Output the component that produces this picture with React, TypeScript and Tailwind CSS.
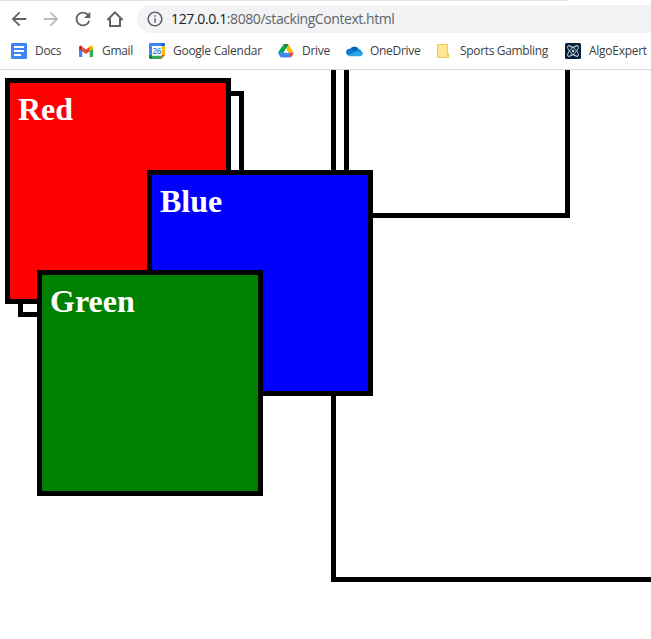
import type { ReactNode } from "react";
import { MdArrowBack, MdArrowForward, MdRefresh, MdOutlineInfo } from "react-icons/md";

function HomeIcon() {
  return (
    <svg width="18" height="18" viewBox="0 0 18 18" fill="none" stroke="#5f6368" strokeWidth="2">
      <path d="M1.4 10 9 2.4 16.6 10M4 8.3V16H14V8.3" />
    </svg>
  );
}

function DocsIcon() {
  return (
    <svg width="16" height="16" viewBox="0 0 16 16">
      <rect width="16" height="16" rx="1" fill="#4285f4" />
      <path d="M3 4h10M3 8h10M3 12h7" stroke="#fff" strokeWidth="2" />
    </svg>
  );
}

function GmailIcon() {
  return (
    <svg width="16" height="16" viewBox="0 0 16 16">
      <path d="M1 4v9.2c0 .5.3.8.8.8h2.5V6.5z" fill="#4285f4" />
      <path d="M15 4v9.2c0 .5-.3.8-.8.8h-2.5V6.5z" fill="#34a853" />
      <path d="M11.7 3.8v4.4L15 5.8V4.2c0-1.6-1.6-2.2-2.6-1.2z" fill="#fbbc04" />
      <path d="M1 4.2v1.6l3.3 2.4V3.8L3.6 3C2.6 2.2 1 2.8 1 4.2z" fill="#c5221f" />
      <path d="M4.3 3.8 8 6.6l3.7-2.8v4.4L8 11 4.3 8.2z" fill="#ea4335" />
    </svg>
  );
}

function CalendarIcon() {
  return (
    <svg width="16" height="16" viewBox="0 0 16 16">
      <path d="M1.2 0H12v3H3v9H0V1.2C0 .5.5 0 1.2 0z" fill="#4285f4" />
      <path d="M12 0h2.8C15.5 0 16 .5 16 1.2V3h-4z" fill="#1967d2" />
      <path d="M12.5 3H16v9h-3.5z" fill="#fbbc04" />
      <path d="M3 12.5h9.5V16H3z" fill="#34a853" />
      <path d="M0 12h3v4H1.2C.5 16 0 15.5 0 14.8z" fill="#188038" />
      <path d="M12.5 12H16l-3.5 4z" fill="#ea4335" />
      <path d="M3 3h9.5v9.5H3z" fill="#fff" />
      <text x="7.7" y="10.8" textAnchor="middle" fontSize="8" fontWeight="600" fontFamily="Open Sans, sans-serif" fill="#3578e5">26</text>
    </svg>
  );
}

function DriveIcon() {
  return (
    <svg width="16" height="16" viewBox="0 0 16 16">
      <path d="M5.4 1.6 8 6 3.4 14.3c-.5-.2-.8-.5-1-.8L.6 10.4c-.3-.5-.4-.9-.4-1.1z" fill="#00a94f" />
      <path d="M5.4 1.6c.3-.4.7-.6 1.2-.6h2.8c.5 0 .9.2 1.2.6L8 6z" fill="#188038" />
      <path d="m10.6 1.6 4.8 7.7h-5.1L8 6z" fill="#fbbc04" />
      <path d="M.2 9.6h5.2l-2.2 4.7c-.5-.2-.7-.4-1-.9L.6 10.8c-.3-.5-.4-.8-.4-1.2z" fill="#4285f4" />
      <path d="M5.5 9.6h5l2.3 4.4c-.3.3-.7.4-1.1.4H4.3c-.4 0-.8-.1-1.1-.3z" fill="#4285f4" />
      <path d="M10.4 9.4h5.2c0 .5-.1.9-.4 1.3l-1.5 2.7c-.2.4-.5.6-.9.8z" fill="#ea4335" />
      <path d="M8 5.6 5.6 9.7h4.8z" fill="#fff" />
    </svg>
  );
}

function OneDriveIcon() {
  return (
    <svg width="17" height="16" viewBox="0 0 17 16">
      <path d="M4 6.2A5 5 0 0 1 12.9 6L9 10z" fill="#0364b8" />
      <path d="M3.7 5.8c1-.1 2 .1 3 .7l3.5 2.2-7.8 3.9A3.5 3.5 0 0 1 3.7 5.8z" fill="#0f78d4" />
      <path d="M10 8.6c.5-1.6 1.4-2.4 2.7-2.6 1.4 0 2.2.7 2.4 2.2 1.9.7 2 2.4 1.3 3.7z" fill="#1490df" />
      <path d="M2.1 12.2 10 8.5l6.4 3.4c-.5.9-1.2 1.3-2.2 1.3H4c-.8 0-1.5-.3-1.9-1z" fill="#28a8ea" />
    </svg>
  );
}

function FolderIcon() {
  return (
    <svg width="14" height="16" viewBox="0 0 14 16">
      <path d="M1.5 1.5h10v9h1v4h-11z" fill="#ffe594" stroke="#eacb54" />
      <path d="M10.5 14V11.5h2" fill="none" stroke="#eacb54" />
    </svg>
  );
}

function AlgoExpertIcon() {
  return (
    <svg width="16" height="16" viewBox="0 0 16 16">
      <rect width="16" height="16" rx="1.5" fill="#02203c" />
      <g fill="none" stroke="#c5d0da" strokeWidth=".9">
        <ellipse cx="8" cy="8" rx="7.2" ry="2.7" transform="rotate(45 8 8)" />
        <ellipse cx="8" cy="8" rx="7.2" ry="2.7" transform="rotate(-45 8 8)" />
        <path d="M4 2.5C6 5 10 5 12 2.5M4 13.5C6 11 10 11 12 13.5" />
      </g>
      <circle cx="8" cy="8" r="1.3" fill="#c5d0da" />
    </svg>
  );
}

function Bookmark({ icon, label, className }: { icon: ReactNode; label: string; className: string }) {
  return (
    <div className={`flex h-full shrink-0 items-center ${className}`}>
      <span className="flex w-6 shrink-0">{icon}</span>
      <span className="whitespace-nowrap">{label}</span>
    </div>
  );
}

function Square({ title, className }: { title: string; className: string }) {
  return (
    <section className={`absolute size-[226px] border-5 border-black px-2 pt-2 ${className}`}>
      <h1 className="font-['Liberation_Serif',serif] text-[32px] leading-[37px] font-bold text-white">{title}</h1>
    </section>
  );
}

export default function App() {
  return (
    <div className="flex h-[639px] w-[651px] flex-col overflow-hidden bg-white">
      <header className="flex h-[70px] shrink-0 flex-col border-b border-[#dadce0] font-['Open_Sans','Noto_Sans',sans-serif]">
        <div className="h-px w-[567px] bg-[#dee1e6]" />
        <nav className="mt-1 flex h-7 shrink-0 items-center pl-2 text-[#5f6368]">
          <MdArrowBack size={22} className="shrink-0" />
          <MdArrowForward size={22} className="ml-2.5 shrink-0 text-[#babcbe]" />
          <MdRefresh size={22} className="ml-2.5 shrink-0" />
          <span className="ml-3 shrink-0"><HomeIcon /></span>
          <div className="ml-[13px] flex h-7 flex-1 items-center rounded-l-full bg-[#f1f3f4] pl-[9px]">
            <MdOutlineInfo size={18} className="shrink-0" />
            <p className="ml-[7px] text-[14px] leading-5 tracking-[-0.43px] whitespace-nowrap">
              <span className="tracking-[-0.36px] text-[#202124]">127.0.0.1</span>:8080/stackingContext.html
            </p>
          </div>
        </nav>
        <div className="flex h-9 shrink-0 items-center pl-[11px] text-[12px] leading-4 text-[#3c4043]">
          <Bookmark icon={<DocsIcon />} label="Docs" className="w-[67px] tracking-[-0.3px]" />
          <Bookmark icon={<GmailIcon />} label="Gmail" className="w-[71px] tracking-[-0.3px]" />
          <Bookmark icon={<CalendarIcon />} label="Google Calendar" className="w-[129px] tracking-[-0.27px]" />
          <Bookmark icon={<DriveIcon />} label="Drive" className="w-[68px] tracking-[-0.3px]" />
          <Bookmark icon={<OneDriveIcon />} label="OneDrive" className="w-[90px] tracking-[-0.3px]" />
          <Bookmark icon={<FolderIcon />} label="Sports Gambling" className="w-[129px] tracking-[-0.33px]" />
          <Bookmark icon={<AlgoExpertIcon />} label="AlgoExpert" className="tracking-[-0.27px]" />
        </div>
      </header>
      {/* Overlapping squares, painted in stacking order */}
      <main className="relative flex-1 overflow-hidden">
        <div className="absolute -top-20 left-[331px] h-[592px] w-[400px] border-5 border-black" />
        <div className="absolute -top-[78px] left-[344px] size-[226px] border-5 border-black" />
        <div className="absolute top-[21px] left-[18px] size-[226px] border-5 border-black" />
        <Square title="Red" className="top-2 left-[5px] bg-[#ff0000]" />
        <Square title="Blue" className="top-[100px] left-[147px] bg-[#0000ff]" />
        <Square title="Green" className="top-[200px] left-[37px] bg-[#008000]" />
      </main>
    </div>
  );
}
